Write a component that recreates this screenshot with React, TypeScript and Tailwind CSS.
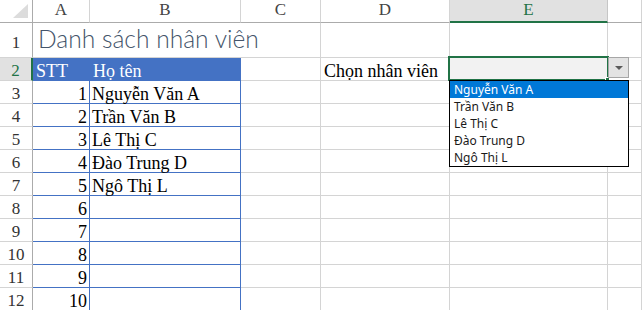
import React from "react";

const names = ["Nguyễn Văn A", "Trần Văn B", "Lê Thị C", "Đào Trung D", "Ngô Thị L"];
const cols = ["A", "B", "C", "D", "E", ""];

function Cell({ className = "", children }: { className?: string; children?: React.ReactNode }) {
  return <div className={`flex items-end overflow-visible whitespace-nowrap leading-[18px] ${className}`}>{children}</div>;
}

export default function App() {
  const rows = Array.from({ length: 12 }, (_, i) => i + 1);

  return (
    <div className="relative w-[642px] h-[310px] overflow-hidden bg-white text-[18px] text-black" style={{ fontFamily: '"Liberation Serif", "Times New Roman", serif' }}>
      <div className="grid grid-cols-[33px_57px_151px_80px_129px_158px_1fr] grid-rows-[23px_35px_repeat(11,23px)]">
        {/* column headers */}
        <div className="relative border-r border-b border-[#ababab] bg-white">
          <div className="absolute right-[4px] bottom-[4px] w-0 h-0 border-l-[15px] border-l-transparent border-b-[14px] border-b-[#dcdcdc]" />
        </div>
        {cols.map((c) =>
          c === "E" ? (
            <Cell key={c} className="justify-center text-[17px] bg-[#e1e1e1] border-r border-r-[#c6c6c6] border-b-2 border-b-[#217346] text-[#217346] pb-[2px]">{c}</Cell>
          ) : (
            <Cell key={c || "F"} className="justify-center text-[17px] border-r border-r-[#d4d4d4] border-b border-b-[#ababab] text-[#444] pb-[3px]">{c}</Cell>
          )
        )}

        {rows.map((r) => {
          const header =
            r === 2 ? (
              <Cell key={`h${r}`} className="justify-center text-[17px] bg-[#e1e1e1] border-r-2 border-r-[#217346] border-b border-b-[#d4d4d4] text-[#217346]">{r}</Cell>
            ) : (
              <Cell key={`h${r}`} className={`justify-center text-[17px] border-r border-r-[#ababab] border-b border-b-[#d4d4d4] text-[#333] ${r === 1 ? "pb-[5px]" : ""}`}>{r}</Cell>
            );

          if (r === 1) {
            return (
              <React.Fragment key={r}>
                {header}
                <Cell className="relative z-10 border-b border-[#d4d4d4]">
                  <span className="pl-[5px] pb-[4px] text-[24.6px] leading-[28px] font-light text-[#44546a]" style={{ fontFamily: "Lato, 'Noto Sans', sans-serif" }}>
                    Danh sách nhân viên
                  </span>
                </Cell>
                <Cell className="border-b border-[#d4d4d4]" />
                <Cell className="border-r border-b border-[#d4d4d4]" />
                <Cell className="border-r border-b border-[#d4d4d4]" />
                <Cell className="border-r border-b border-[#d4d4d4]" />
                <Cell className="border-r border-b border-[#d4d4d4]" />
              </React.Fragment>
            );
          }

          if (r === 2) {
            return (
              <React.Fragment key={r}>
                {header}
                <Cell className="bg-[#4472c4] border-b border-b-[#4472c4] text-white pl-[3px] border-r border-r-[#4472c4]">STT</Cell>
                <Cell className="bg-[#4472c4] border-b border-b-[#4472c4] text-white pl-[3px] border-r border-r-[#4472c4]">Họ tên</Cell>
                <Cell className="border-r border-b border-[#d4d4d4]" />
                <Cell className="border-r border-b border-[#d4d4d4] pl-[3px]">Chọn nhân viên</Cell>
                <Cell className="bg-[#f2f2f2] border-r border-b border-[#d4d4d4]" />
                <Cell className="border-r border-b border-[#d4d4d4]" />
              </React.Fragment>
            );
          }

          const idx = r - 3;
          return (
            <React.Fragment key={r}>
              {header}
              <Cell className="justify-end pr-[2px] border-r border-b border-[#4472c4]">{idx + 1}</Cell>
              <Cell className="pl-[2px] border-r border-b border-[#4472c4]">{names[idx] ?? ""}</Cell>
              <Cell className="border-r border-b border-[#d4d4d4]" />
              <Cell className="border-r border-b border-[#d4d4d4]" />
              <Cell className="border-r border-b border-[#d4d4d4]" />
              <Cell className="border-r border-b border-[#d4d4d4]" />
            </React.Fragment>
          );
        })}
      </div>

      {/* selected cell E2 */}
      <div className="absolute left-[448px] top-[56px] w-[161px] h-[25px] border-2 border-[#217346] pointer-events-none" />
      <div className="absolute left-[605px] top-[77px] w-[5px] h-[5px] bg-[#217346] border border-white" />

      {/* dropdown button */}
      <div className="absolute left-[608px] top-[57px] w-[21px] h-[21px] bg-[#e3e3e3] border border-[#a6a6a6] flex items-center justify-center">
        <div className="w-0 h-0 border-l-[4px] border-r-[4px] border-t-[4px] border-l-transparent border-r-transparent border-t-[#5a5a5a]" />
      </div>

      {/* list */}
      <div className="absolute left-[449px] top-[80px] w-[180px] h-[87px] bg-white border border-black text-[12px] text-[#1a1a1a]" style={{ fontFamily: '"Noto Sans", "Segoe UI", sans-serif' }}>
        {names.map((n, i) => (
          <div key={n} className={`h-[17px] leading-[17px] pl-[4px] ${i === 0 ? "bg-[#0078d7] text-white" : ""}`}>{n}</div>
        ))}
      </div>
    </div>
  );
}
